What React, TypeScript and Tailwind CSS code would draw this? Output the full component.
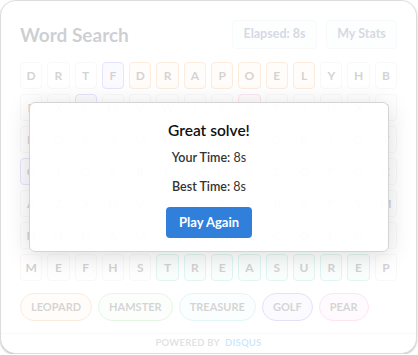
const grid: string[] = [
  'DRTFDRAPOELYHB',
  'PXLMVWITRTJHXS',
  'KORJMHDNAOKIDT',
  'GJQLBFMMEZQPQC',
  'AZXNVPSTPBXPYM',
  'NHHAMSTERGOLHS',
  'MEFHSTREASUREP',
]

type Tone = 'orange' | 'green' | 'teal' | 'purple' | 'pink'

const toneCell: Record<Tone, string> = {
  orange: 'border-[#f0b27a] bg-[#fff3e6]',
  green: 'border-[#9be39a] bg-[#effcee]',
  teal: 'border-[#7fd9cf] bg-[#eafaf7]',
  purple: 'border-[#9d8ff0] bg-[#eeebff]',
  pink: 'border-[#f29ac8] bg-[#fdebf4]',
}

// row-col -> tone
const marks: Record<string, Tone> = {}
for (let c = 4; c <= 10; c++) marks[`0-${c}`] = 'orange'
for (let c = 2; c <= 8; c++) marks[`5-${c}`] = 'green'
for (let c = 5; c <= 12; c++) marks[`6-${c}`] = 'teal'
marks['0-3'] = 'purple'
marks['1-2'] = 'purple'
marks['2-1'] = 'purple'
marks['3-0'] = 'purple'
marks['1-8'] = 'pink'
marks['2-8'] = 'pink'
marks['3-8'] = 'pink'
marks['4-8'] = 'pink'

const words: { w: string; tone: Tone }[] = [
  { w: 'LEOPARD', tone: 'orange' },
  { w: 'HAMSTER', tone: 'green' },
  { w: 'TREASURE', tone: 'teal' },
  { w: 'GOLF', tone: 'purple' },
  { w: 'PEAR', tone: 'pink' },
]

const tonePill: Record<Tone, string> = {
  orange: 'border-[#f0b27a] bg-[#fff3e6]',
  green: 'border-[#8fe08a] bg-[#f0fcef]',
  teal: 'border-[#86dcd6] bg-[#ecfbfa]',
  purple: 'border-[#8f82ec] bg-[#ece9ff]',
  pink: 'border-[#f29ac8] bg-[#fdecf5]',
}

export default function App() {
  return (
    <div className="relative w-[417px] h-[354px] rounded-2xl border border-[#dcdcdc] bg-white overflow-hidden shadow-[0_1px_2px_rgba(0,0,0,0.25)] font-['Lato',sans-serif]">
      <div className="px-[19px] pt-[19px]">
        <div className="flex items-center justify-between h-[29px]">
          <h1 className="text-[19px] font-bold text-[#3a4250] leading-none">Word Search</h1>
          <div className="flex gap-[9px]">
            <div className="h-[29px] w-[85px] flex items-center justify-center rounded-[4px] border border-[#e3e6ec] bg-[#f8f9fb] text-[12.5px] font-bold text-[#56688a]">
              Elapsed: 8s
            </div>
            <div className="h-[29px] w-[71px] flex items-center justify-center rounded-[4px] border border-[#e3e6ec] bg-[#f8f9fb] text-[12.5px] font-bold text-[#56688a]">
              My Stats
            </div>
          </div>
        </div>

        <div className="mt-[13px] grid grid-cols-[repeat(14,minmax(0,1fr))] gap-x-[5px] gap-y-[5px]">
          {grid.map((row, r) =>
            row.split('').map((ch, c) => {
              const t = marks[`${r}-${c}`]
              return (
                <div
                  key={`${r}-${c}`}
                  className={`h-[27px] flex items-center justify-center rounded-[4px] border text-[12px] font-bold text-[#505050] ${
                    t ? toneCell[t] : 'border-[#e2e2e2] bg-white'
                  }`}
                >
                  {ch}
                </div>
              )
            })
          )}
        </div>

        <div className="mt-[12px] flex gap-[6px]">
          {words.map((x) => (
            <div
              key={x.w}
              className={`h-[28px] px-[10px] flex items-center rounded-full border text-[11px] font-bold text-[#555] ${tonePill[x.tone]}`}
            >
              {x.w}
            </div>
          ))}
        </div>
      </div>

      <div className="mt-[12px] border-t border-[#e8e8e8] h-[20px] flex items-center justify-center gap-[5px] text-[9.5px] font-bold tracking-wide">
        <span className="text-[#8a8a8a]">POWERED BY</span>
        <span className="text-[#2e9fff]">DISQUS</span>
      </div>

      <div className="absolute inset-0 bg-white/75" />

      <div className="absolute left-[28px] top-[101px] w-[360px] h-[150px] rounded-[6px] border border-[#d4d4d4] bg-white/95 shadow-[0_4px_24px_rgba(0,0,0,0.14)] flex flex-col items-center pt-[15px]">
        <div className="text-[15.5px] font-semibold text-[#111] leading-[24px]">Great solve!</div>
        <div className="mt-[6px] text-[12.5px] text-[#333] leading-[20px]">
          <span className="font-semibold">Your Time:</span> 8s
        </div>
        <div className="mt-[9px] text-[12.5px] text-[#333] leading-[20px]">
          <span className="font-semibold">Best Time:</span> 8s
        </div>
        <button className="mt-[10px] w-[86px] h-[31px] rounded-[4px] bg-[#2f7fdb] text-white text-[13px] font-bold">
          Play Again
        </button>
      </div>
    </div>
  )
}
